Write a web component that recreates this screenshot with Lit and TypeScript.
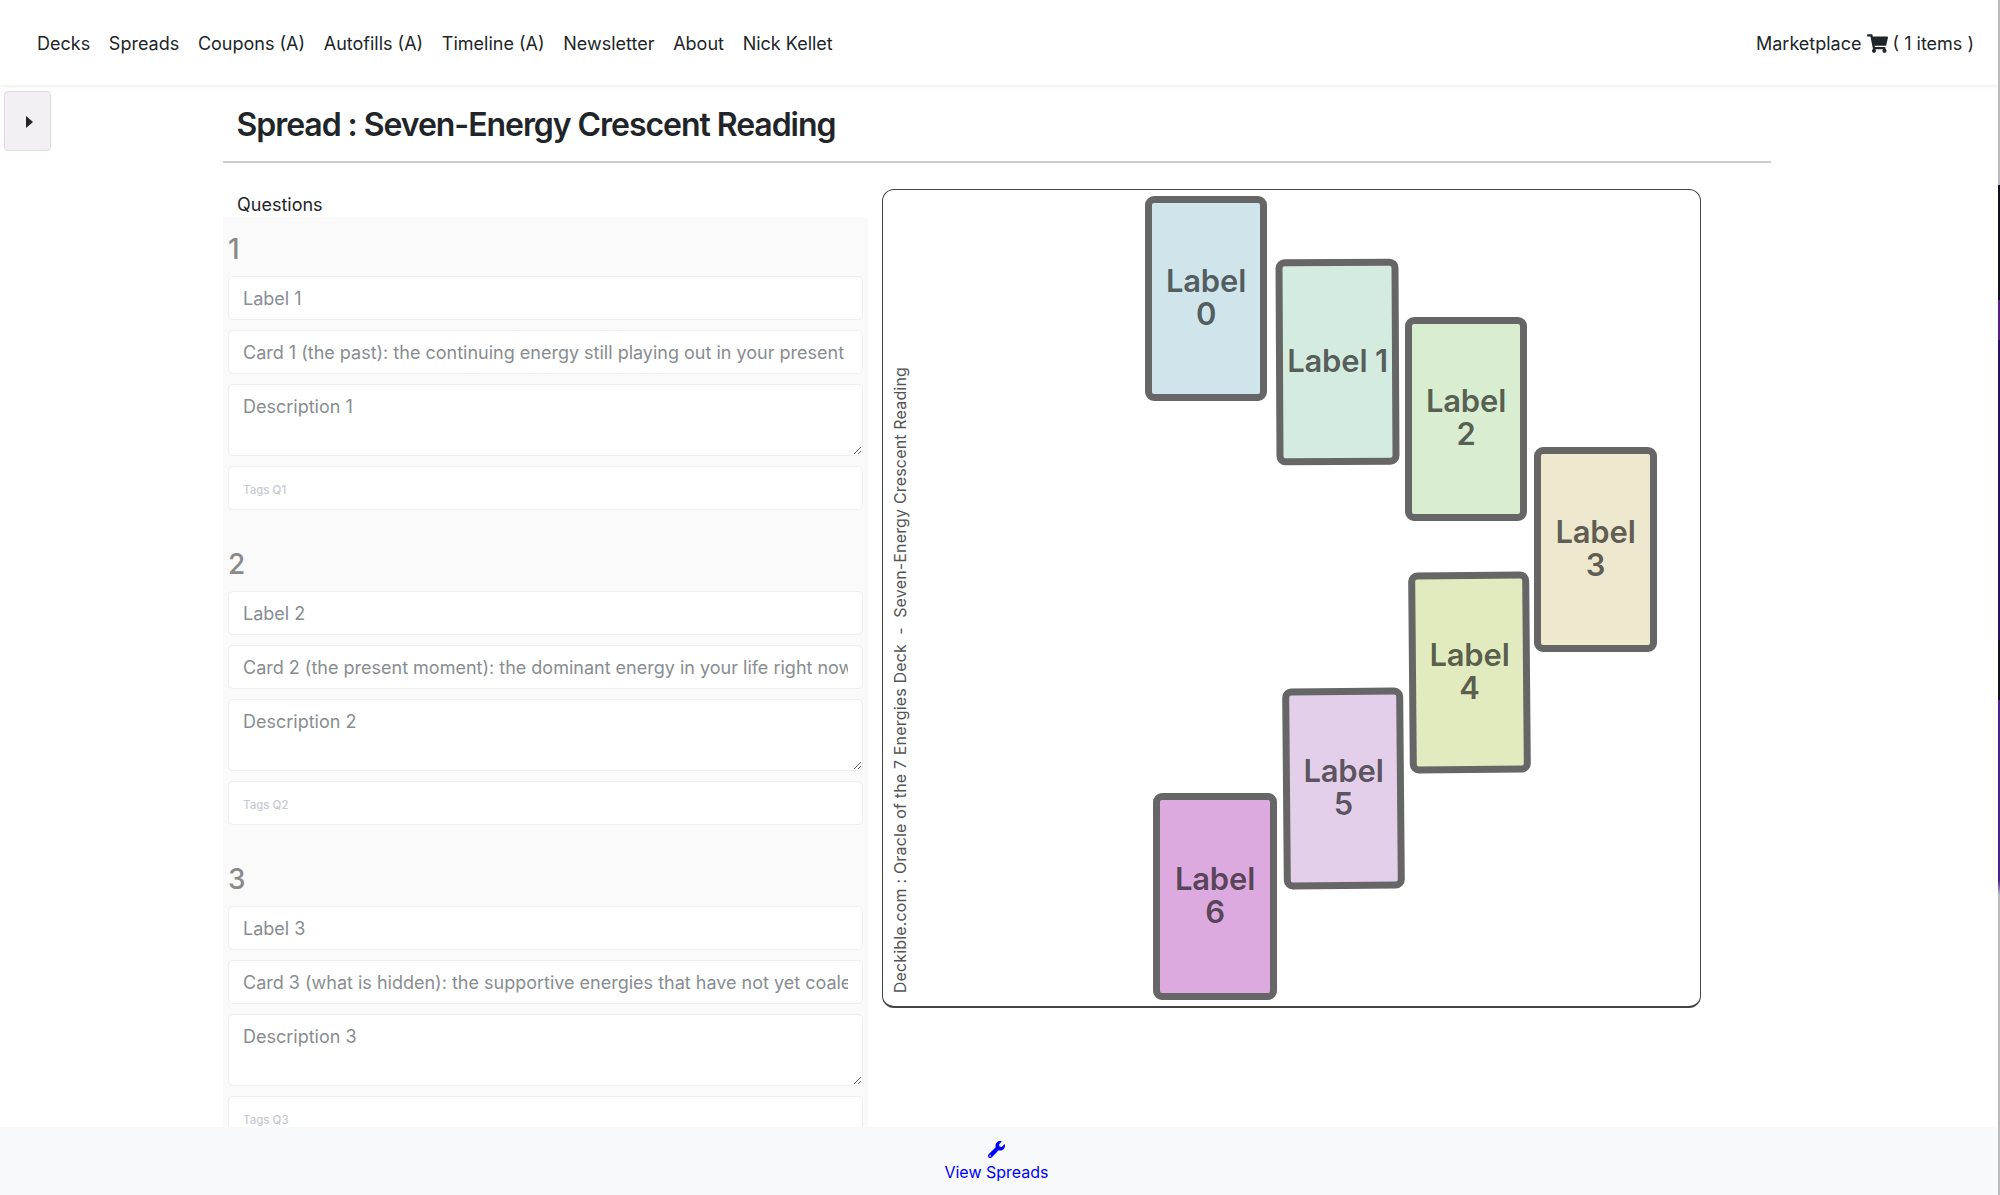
import { LitElement, html, css } from "lit";
import { customElement } from "lit/decorators.js";

const NAV = ["Decks", "Spreads", "Coupons (A)", "Autofills (A)", "Timeline (A)", "Newsletter", "About", "Nick Kellet"];
const QUESTIONS = [
  { n: 1, text: "Card 1 (the past): the continuing energy still playing out in your present" },
  { n: 2, text: "Card 2 (the present moment): the dominant energy in your life right now" },
  { n: 3, text: "Card 3 (what is hidden): the supportive energies that have not yet coalesced" },
];
const CARDS = [
  { t: ["Label", "0"], x: 262, y: 6, w: 122, h: 205, bg: "#cfe5eb", r: 0 },
  { t: ["Label 1"], x: 393, y: 69, w: 123, h: 206, bg: "#d4ecdf", r: -0.3 },
  { t: ["Label", "2"], x: 522, y: 127, w: 122, h: 204, bg: "#d9edd0", r: 0 },
  { t: ["Label", "3"], x: 651, y: 257, w: 123, h: 205, bg: "#eee8cf", r: 0 },
  { t: ["Label", "4"], x: 526, y: 382, w: 121, h: 201, bg: "#e2ebbf", r: -0.5 },
  { t: ["Label", "5"], x: 400, y: 498, w: 121, h: 201, bg: "#e3cfea", r: -0.5 },
  { t: ["Label", "6"], x: 270, y: 603, w: 124, h: 207, bg: "#dcaade", r: 0 },
];

@customElement("app-root")
export class AppRoot extends LitElement {
  static styles = css`
    :host { display: block; font-family: Inter, "Liberation Sans", sans-serif; color: #212529; }
    .page { position: relative; height: 1195px; display: flex; flex-direction: column; overflow: hidden; background: #fff; }
    nav { flex: none; height: 85px; box-sizing: border-box; display: flex; align-items: center; justify-content: space-between; padding: 1px 26px 0 37px; font-size: 18px; box-shadow: 0 1px 4px rgba(0,0,0,.09); }
    .links { display: flex; gap: 18.7px; }
    .cart { display: flex; align-items: center; gap: 5px; }
    .cart svg { width: 21px; height: 19px; fill: #212529; }
    .toggle { position: absolute; left: 4px; top: 91px; width: 47px; height: 60px; box-sizing: border-box; background: #f3eff5; border: 1px solid #dcdcdc; border-radius: 4px; display: flex; align-items: center; justify-content: center; padding: 2px 0 0 3px; }
    .toggle svg { width: 7px; height: 12px; fill: #212529; }
    .edge { position: absolute; right: 0; top: 0; bottom: 0; width: 2px; background: linear-gradient(#bbb 0 185px, #14101f 185px 300px, #5a1f86 300px 340px, #2a1060 340px 640px, #14101f 640px 700px, #4a1f90 700px 880px, #bbb 895px); }
    main { flex: 1; min-height: 0; width: 1548px; margin-left: 223px; display: flex; flex-direction: column; }
    h2 { margin: 0; height: 78px; box-sizing: border-box; padding: 20px 0 0 13.5px; font-size: 32px; line-height: 40px; font-weight: 600; letter-spacing: -1.05px; border-bottom: 2px solid #ccc; }
    .cols { flex: 1; min-height: 0; display: flex; gap: 14px; }
    .left { width: 645px; display: flex; flex-direction: column; min-height: 0; }
    .q-title { padding: 30px 0 0 14px; font-size: 18px; line-height: 24px; height: 54px; box-sizing: border-box; flex: none; }
    .panel { flex: 1; min-height: 0; overflow: hidden; background: #fafafa; padding: 14px 5px 0; }
    .q { display: flex; flex-direction: column; gap: 10px; height: 315px; }
    .num { font-size: 28px; line-height: 36px; height: 35px; color: #8a8a8a; font-weight: 500; }
    input, textarea { display: block; width: 100%; box-sizing: border-box; margin: 0; padding: 0 14px; height: 44px; border: 1px solid #eceef0; border-radius: 5px; background: #fff; font: 18px/26px Inter, "Liberation Sans", sans-serif; color: #212529; outline: none; }
    input::placeholder, textarea::placeholder { color: #888d91; opacity: 1; }
    textarea { height: 72px; padding-top: 9px; resize: vertical; }
    input.tags { font-size: 11.5px; font-weight: 500; padding-top: 3px; }
    input.tags::placeholder { color: #c6cad3; }
    .canvas { position: relative; flex: none; width: 819px; height: 819px; margin-top: 26px; box-sizing: border-box; border: 1px solid #444; border-bottom: 2px solid #444; border-radius: 12px; background: #fff; }
    .side { position: absolute; left: 7px; bottom: 13px; writing-mode: vertical-rl; transform: rotate(180deg); font-size: 16px; letter-spacing: .17px; line-height: 20px; color: #555; white-space: pre; }
    .card { position: absolute; box-sizing: border-box; display: flex; flex-direction: column; align-items: center; justify-content: center; text-align: center; padding-bottom: 4px; font-size: 31px; font-weight: 600; line-height: 33px; letter-spacing: -.2px; color: rgba(0,0,0,.62); white-space: nowrap; }
    .card::before { content: ""; position: absolute; inset: 0; box-sizing: border-box; border: 7px solid #666; border-radius: 9px; background: var(--bg); transform: rotate(var(--r)); }
    .line { position: relative; height: 33px; }
    footer { flex: none; height: 68px; background: #f8f9fa; display: flex; flex-direction: column; align-items: center; padding-top: 14px; box-sizing: border-box; font-size: 16px; color: #0000ff; }
    footer .in { margin-left: -7px; display: flex; flex-direction: column; align-items: center; gap: 4px; line-height: 20px; }
    footer svg { width: 17px; height: 17px; fill: #0000ff; }
  `;

  render() {
    return html`<div class="page">
      <nav>
        <div class="links">${NAV.map((n) => html`<span>${n}</span>`)}</div>
        <div class="cart"><span>Marketplace</span>
          <svg viewBox="0 0 576 512"><path d="M528.12 301.319l47.273-208C578.806 78.301 567.391 64 551.99 64H159.208l-9.166-44.81C147.758 8.021 137.93 0 126.529 0H24C10.745 0 0 10.745 0 24v16c0 13.255 10.745 24 24 24h69.883l70.248 343.435C147.325 417.1 136 435.222 136 456c0 30.928 25.072 56 56 56s56-25.072 56-56c0-15.674-6.447-29.835-16.824-40h209.647C430.447 426.165 424 440.326 424 456c0 30.928 25.072 56 56 56s56-25.072 56-56c0-22.172-12.888-41.332-31.579-50.405l5.517-24.276c3.413-15.018-8.002-29.319-23.403-29.319H218.117l-6.545-32h293.145c11.206 0 20.92-7.754 23.403-18.681z"/></svg>
          <span>( 1 items )</span></div>
      </nav>
      <div class="toggle"><svg viewBox="0 0 7 12"><path d="M0 0l7 6-7 6z"/></svg></div>
      <main>
        <h2>Spread : Seven-Energy Crescent Reading</h2>
        <div class="cols">
          <div class="left">
            <div class="q-title">Questions</div>
            <div class="panel">
              ${QUESTIONS.map((q) => html`<div class="q">
                <div class="num">${q.n}</div>
                <input placeholder="Label ${q.n}" />
                <input placeholder="${q.text}" />
                <textarea placeholder="Description ${q.n}"></textarea>
                <input class="tags" placeholder="Tags Q${q.n}" />
              </div>`)}
            </div>
          </div>
          <div class="canvas">
            <div class="side">Deckible.com : Oracle of the 7 Energies Deck  -  Seven-Energy Crescent Reading</div>
            ${CARDS.map((c) => html`<div class="card" style="left:${c.x}px;top:${c.y}px;width:${c.w}px;height:${c.h}px;--bg:${c.bg};--r:${c.r}deg">${c.t.map((l) => html`<div class="line">${l}</div>`)}</div>`)}
          </div>
        </div>
      </main>
      <footer><div class="in">
        <svg viewBox="0 0 512 512"><path d="M507.73 109.1c-2.24-9.03-13.54-12.09-20.12-5.51l-74.36 74.36-67.88-11.31-11.31-67.88 74.36-74.36c6.62-6.62 3.43-17.9-5.66-20.16-47.38-11.74-99.55.91-136.58 37.93-39.64 39.64-50.55 97.1-34.05 147.2L18.74 402.76c-24.99 24.99-24.99 65.51 0 90.5 24.99 24.99 65.51 24.99 90.5 0l213.21-213.21c50.12 16.71 107.47 5.68 147.37-34.22 37.07-37.07 49.7-89.32 37.91-136.73zM64 472c-13.25 0-24-10.75-24-24 0-13.26 10.75-24 24-24s24 10.74 24 24c0 13.25-10.75 24-24 24z"/></svg>
        <span>View Spreads</span>
      </div></footer>
      <div class="edge"></div>
    </div>`;
  }
}
